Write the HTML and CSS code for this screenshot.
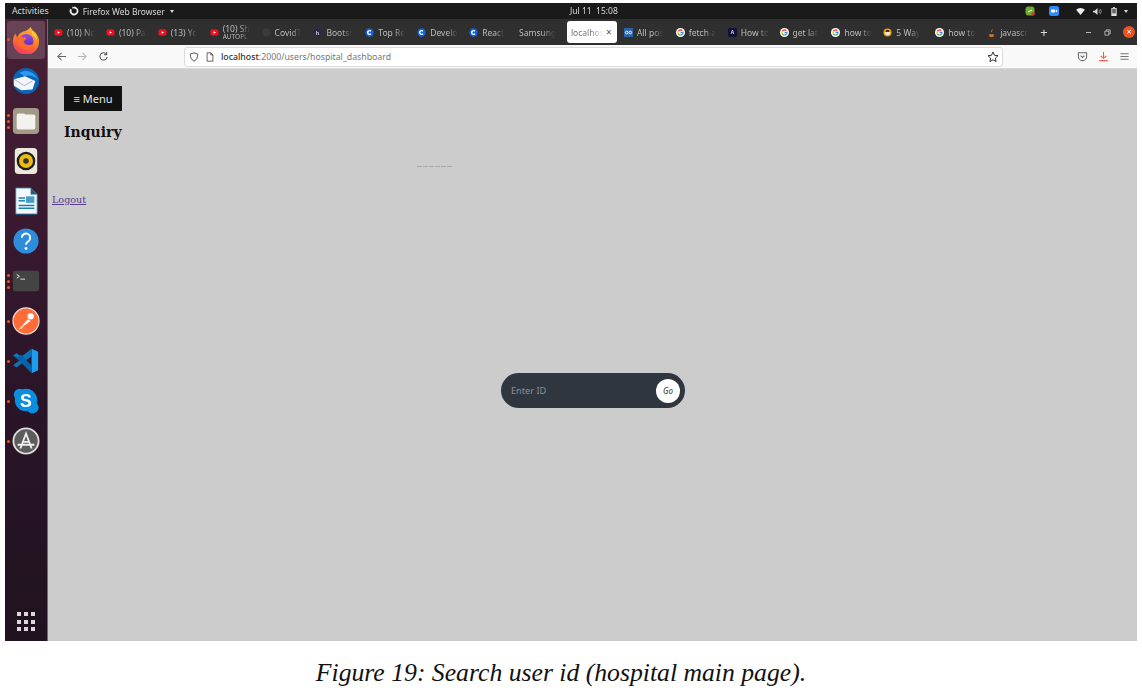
FILE: index.html
```html
<!DOCTYPE html>
<html lang="en">
<head>
<meta charset="utf-8">
<title>Figure 19</title>
<link rel="stylesheet" href="styles.css">
</head>
<body>
<svg class="defs" width="0" height="0" aria-hidden="true">
  <defs>
    <linearGradient id="foxbody" x1="0.7" y1="0" x2="0.3" y2="1"><stop offset="0" stop-color="#ffb82e"/><stop offset=".5" stop-color="#ff7a2a"/><stop offset="1" stop-color="#f0306a"/></linearGradient>
    <linearGradient id="foxglobe" x1="0.5" y1="0" x2="0.5" y2="1"><stop offset="0" stop-color="#8b4fe0"/><stop offset="1" stop-color="#5a28b8"/></linearGradient>
  </defs>
  <symbol id="yt" viewBox="0 0 10 10"><rect x="0.5" y="1.5" width="9" height="7" rx="2" fill="#f0101c"/><path d="M4 3.5 6.6 5 4 6.5z" fill="#fff"/></symbol>
  <symbol id="goog" viewBox="0 0 10 10"><circle cx="5" cy="5" r="5" fill="#fff"/><path d="M5 1.5A3.5 3.5 0 0 0 1.9 3.4L3.1 4.3A2.2 2.2 0 0 1 6.5 3.4L7.5 2.5A3.5 3.5 0 0 0 5 1.5z" fill="#ea4335"/><path d="M1.9 3.4a3.5 3.5 0 0 0 0 3.2L3.1 5.7a2.2 2.2 0 0 1 0-1.4z" fill="#fbbc05"/><path d="M1.9 6.6A3.5 3.5 0 0 0 7.4 7.5L6.3 6.7A2.2 2.2 0 0 1 3.1 5.7z" fill="#34a853"/><path d="M8.4 4.2H5v1.3h2A1.8 1.8 0 0 1 6.3 6.7L7.4 7.5A3.5 3.5 0 0 0 8.4 4.2z" fill="#4285f4"/></symbol>
  <symbol id="cc" viewBox="0 0 10 10"><circle cx="5" cy="5" r="4.6" fill="#1463d8"/><path d="M6.6 3.6A2.1 2.1 0 1 0 6.6 6.4" fill="none" stroke="#fff" stroke-width="1.5"/></symbol>
</svg>

<div class="shot">
  <header class="topbar">
    <span class="activities">Activities</span>
    <span class="appmenu">
      <svg class="appicon" viewBox="0 0 10 10"><path d="M5 .6A4.400 4.400 0 1 1 1.200 2.800L2.800 3.800A2.600 2.600 0 1 0 5 2.400z" fill="#eee"/><path d="M3.200 .4 5.600 1.500 3.600 3z" fill="#eee"/></svg>
      Firefox Web Browser
      <i class="caret"></i>
    </span>
    <span class="clock">Jul 11&nbsp;&nbsp;15:08</span>
    <span class="tray">
      <svg class="tray-i tray-green" viewBox="0 0 10 10"><rect x="0.5" y="0.5" width="9" height="9" rx="3" fill="#6cab2d"/><circle cx="8" cy="8" r="1.8" fill="#e0303a"/><path d="M3 6l4-2" stroke="#fff"/></svg>
      <svg class="tray-i tray-zoom" viewBox="0 0 10 10"><rect width="10" height="10" rx="2.5" fill="#2d8cff"/><rect x="2" y="3.4" width="4" height="3.2" rx=".8" fill="#fff"/><path d="M6.5 4.6 8.2 3.5v3L6.5 5.4z" fill="#fff"/></svg>
      <svg class="tray-i tray-wifi" viewBox="0 0 10 8"><path d="M0 2a7.5 7.5 0 0 1 10 0L5 8z" fill="#eee"/></svg>
      <svg class="tray-i tray-vol" viewBox="0 0 10 8"><path d="M0 3h2l3-3v8L2 5H0z" fill="#ddd"/><path d="M6.5 2a3 3 0 0 1 0 4M8 1a4.5 4.5 0 0 1 0 6" stroke="#999" fill="none"/></svg>
      <svg class="tray-i tray-bat" viewBox="0 0 6 10"><path d="M2 0h2v1h2v9H0V1h2z" fill="#ddd"/><rect x="1" y="2" width="4" height="5" fill="#666"/></svg>
      <i class="caret caret-tray"></i>
    </span>
  </header>

  <div class="desktop">
    <nav class="dock">
      <div class="dock-item dock-active"><i class="pip"></i>
        <svg class="dock-i" viewBox="0 0 30 30"><path d="M20 1c1 3 3 4 5 6 3 3 4 7 4 10a14 14 0 0 1-28 0c0-4 1-7 3-9 0 2 1 3 2 4 1-3 3-5 6-6 3-1 6-2 8-5z" fill="url(#foxbody)"/><circle cx="15.500" cy="16" r="7.500" fill="url(#foxglobe)"/><path d="M5 12c3-1 6 0 9 0 2 0 2 2 0 3-2 1-2 2 0 4 3 2 7 2 10-1-1 5-5 8-10 7-6-1-10-7-9-13z" fill="#ff6a2a"/><path d="M21 5c3 2 6 6 6 11-1-3-3-5-5-6z" fill="#ffd34a"/></svg>
      </div>
      <div class="dock-item">
        <svg class="dock-i" viewBox="0 0 30 30"><circle cx="15" cy="15" r="14" fill="#0a64b8"/><path d="M8 6a14 14 0 0 1 20 8c-3-4-10-6-15-4z" fill="#2e9bf0"/><path d="M2 13l12-3 11 5-3 9-12 1-8-5z" fill="#f3f6fa"/><path d="M2 13l11 7 9-5" fill="none" stroke="#9bb0c8"/></svg>
      </div>
      <div class="dock-item"><i class="pip pips"></i>
        <svg class="dock-i" viewBox="0 0 30 30"><rect x="1" y="1" width="28" height="28" rx="4" fill="#a29a86"/><rect x="5" y="8" width="20" height="16" rx="2" fill="#f4f2ee"/><path d="M5 9a2 2 0 0 1 2-2h6l2 2z" fill="#f4f2ee"/></svg>
      </div>
      <div class="dock-item">
        <svg class="dock-i" viewBox="0 0 30 30"><rect x="3" y="1" width="24" height="28" rx="4" fill="#ece8dc"/><circle cx="15" cy="15" r="10" fill="#1e1e1e"/><circle cx="15" cy="15" r="7.5" fill="#eebb11"/><circle cx="15" cy="15" r="3" fill="#333"/></svg>
      </div>
      <div class="dock-item">
        <svg class="dock-i" viewBox="0 0 30 30"><path d="M4 1h16l7 7v21H4z" fill="#f4f8fb" stroke="#1a7fb0"/><path d="M20 1l7 7h-7z" fill="#18607f"/><rect x="7" y="11" width="7" height="1.6" fill="#1a7fb0"/><rect x="7" y="14" width="7" height="1.6" fill="#1a7fb0"/><rect x="15" y="10" width="9" height="7" fill="#4a9cc8"/><rect x="7" y="19" width="17" height="1.6" fill="#1a7fb0"/><rect x="7" y="22" width="17" height="1.6" fill="#1a7fb0"/></svg>
      </div>
      <div class="dock-item">
        <svg class="dock-i" viewBox="0 0 30 30"><circle cx="15" cy="15" r="13.5" fill="#2e8cdc"/><path d="M10.5 11.5a4.5 4.5 0 1 1 7 3.7c-1.6 1-2.5 1.8-2.5 3.8" fill="none" stroke="#fff" stroke-width="2"/><circle cx="15" cy="23" r="1.5" fill="#fff"/></svg>
      </div>
      <div class="dock-item"><i class="pip pips"></i>
        <svg class="dock-i" viewBox="0 0 30 30"><rect x="1" y="4" width="28" height="22" rx="2.5" fill="#444"/><path d="M5 8l3 2-3 2" fill="none" stroke="#eee"/><path d="M9 13h5" stroke="#eee"/></svg>
      </div>
      <div class="dock-item"><i class="pip"></i>
        <svg class="dock-i" viewBox="0 0 30 30"><circle cx="15" cy="15" r="14" fill="#ff6c37" stroke="#f1ddd4" stroke-width="1.2"/><path d="M7 24l10-11 3 2z" fill="#fff"/><path d="M7 24l4-1 2-4z" fill="#ffd5c4"/><circle cx="20" cy="10" r="3.4" fill="#fff"/></svg>
      </div>
      <div class="dock-item"><i class="pip"></i>
        <svg class="dock-i" viewBox="0 0 30 30"><path d="M21 2l7 3v20l-7 3z" fill="#1f9cf0"/><path d="M21 2v8L10 18l-5 4-4-2.500 7-5-7-5.500 4-2.500 5 4z" fill="#0e72b8"/><path d="M21 20v8L5 12l5-4z" fill="#0065a9"/></svg>
      </div>
      <div class="dock-item"><i class="pip"></i>
        <svg class="dock-i" viewBox="0 0 30 30"><circle cx="15" cy="14" r="12" fill="#0a8fe0"/><circle cx="8" cy="8" r="6" fill="#0a8fe0"/><circle cx="22" cy="22" r="6.500" fill="#0a8fe0"/><text class="dock-s" x="15" y="21">S</text></svg>
      </div>
      <div class="dock-item"><i class="pip"></i>
        <svg class="dock-i" viewBox="0 0 30 30"><circle cx="15" cy="15" r="13.500" fill="#5c5c5c" stroke="#ddd" stroke-width="2"/><path d="M9 23l6-16 6 16M11 16h8M6 19h18" fill="none" stroke="#eee" stroke-width="2"/></svg>
      </div>
      <div class="dock-grid" aria-label="Show Applications">
        <i></i><i></i><i></i><i></i><i></i><i></i><i></i><i></i><i></i>
      </div>
    </nav>

    <div class="browser">
      <div class="tabstrip">
        <div class="tab"><svg class="fav"><use href="#yt"/></svg><span class="tab-t">(10) Nc</span></div>
        <div class="tab"><svg class="fav"><use href="#yt"/></svg><span class="tab-t">(10) Pa</span></div>
        <div class="tab"><svg class="fav"><use href="#yt"/></svg><span class="tab-t">(13) Yo</span></div>
        <div class="tab"><svg class="fav"><use href="#yt"/></svg><span class="tab-t tab-two">(10) Sh<small>AUTOPL</small></span></div>
        <div class="tab"><svg class="fav" viewBox="0 0 10 10"><circle cx="5" cy="5" r="4.500" fill="#3a3a3a"/></svg><span class="tab-t">CovidT</span></div>
        <div class="tab"><svg class="fav" viewBox="0 0 10 10"><circle cx="5" cy="5" r="4.500" fill="#2b2550"/><text class="fav-h" x="5" y="7.500">h</text></svg><span class="tab-t">Bootst</span></div>
        <div class="tab"><svg class="fav"><use href="#cc"/></svg><span class="tab-t">Top Re</span></div>
        <div class="tab"><svg class="fav"><use href="#cc"/></svg><span class="tab-t">Develo</span></div>
        <div class="tab"><svg class="fav"><use href="#cc"/></svg><span class="tab-t">React</span></div>
        <div class="tab tab-bare"><span class="tab-t">Samsung</span></div>
        <div class="tab tab-active"><span class="tab-t">localhos</span><span class="tab-x">×</span></div>
        <div class="tab"><svg class="fav" viewBox="0 0 10 10"><rect width="10" height="10" fill="#2a64a8"/><path d="M1.500 5a1.500 1.500 0 1 0 3 0 1.500 1.500 0 1 0-3 0M5.500 5a1.500 1.500 0 1 0 3 0 1.500 1.500 0 1 0-3 0" fill="none" stroke="#fff"/></svg><span class="tab-t">All pos</span></div>
        <div class="tab"><svg class="fav"><use href="#goog"/></svg><span class="tab-t">fetch a</span></div>
        <div class="tab"><svg class="fav" viewBox="0 0 10 10"><rect width="10" height="10" rx="2" fill="#10103a"/><text class="fav-a" x="5" y="7.200">A</text></svg><span class="tab-t">How to</span></div>
        <div class="tab"><svg class="fav"><use href="#goog"/></svg><span class="tab-t">get lat</span></div>
        <div class="tab"><svg class="fav"><use href="#goog"/></svg><span class="tab-t">how to</span></div>
        <div class="tab"><svg class="fav" viewBox="0 0 10 10"><circle cx="5" cy="5" r="4.500" fill="#e8a010"/><circle cx="5" cy="5" r="3" fill="#fbe8d0"/><path d="M2.500 4.500a2.500 2.500 0 0 1 5 0z" fill="#5a2a10"/></svg><span class="tab-t">5 Way</span></div>
        <div class="tab"><svg class="fav"><use href="#goog"/></svg><span class="tab-t">how to</span></div>
        <div class="tab"><svg class="fav" viewBox="0 0 10 10"><path d="M6 0c1 2-3 3-1 5 0-1 2-2 1-5zM2 7h6l-1 3H3z" fill="#c8752a"/></svg><span class="tab-t">javascr</span></div>
        <span class="tab-new">+</span>
        <span class="winbtns">
          <i class="win-min"></i>
          <svg class="win-res" viewBox="0 0 8 8"><path d="M1 2.500h4.500v4.500H1zM2.500 2.500V1H7v4.500H5.500" fill="none" stroke="#bbb"/></svg>
          <span class="win-close">×</span>
        </span>
      </div>

      <div class="toolbar">
        <svg class="tb-i" viewBox="0 0 12 12"><path d="M11 6H2M6 2 2 6l4 4" fill="none" stroke="#666" stroke-width="1.100"/></svg>
        <svg class="tb-i" viewBox="0 0 12 12"><path d="M1 6h9M6 2l4 4-4 4" fill="none" stroke="#b5b5b5" stroke-width="1.100"/></svg>
        <svg class="tb-i" viewBox="0 0 12 12"><path d="M10 6.500A4 4 0 1 1 8.800 3M9.500 1v3h-3" fill="none" stroke="#555" stroke-width="1.100"/></svg>
        <div class="urlbar">
          <svg class="url-i" viewBox="0 0 12 12"><path d="M6 1l4.500 1.500C10.500 7 9 9.500 6 11 3 9.500 1.500 7 1.500 2.500z" fill="none" stroke="#444" stroke-width="1.100"/></svg>
          <svg class="url-i" viewBox="0 0 12 12"><path d="M2.500 1h4.500l2.500 2.500V11h-7zM7 1v2.500h2.500" fill="none" stroke="#444"/></svg>
          <span class="url"><b>localhost</b>:2000/users/hospital_dashboard</span>
          <svg class="url-star" viewBox="0 0 12 12"><path d="M6 1l1.500 3.300 3.500.4-2.600 2.400.7 3.500L6 8.800l-3.100 1.800.7-3.500L1 4.700l3.500-.4z" fill="none" stroke="#333"/></svg>
        </div>
        <svg class="tb-i tb-pocket" viewBox="0 0 12 12"><path d="M1.500 2h9v4a4.500 4.500 0 0 1-9 0zM4 5l2 2 2-2" fill="none" stroke="#666" stroke-width="1.100"/></svg>
        <svg class="tb-i tb-dl" viewBox="0 0 12 12"><path d="M6 1v7M3 5.500 6 8l3-2.500M1.500 10.500h9" fill="none" stroke="#f0633c" stroke-width="1.200"/></svg>
        <svg class="tb-i tb-menu" viewBox="0 0 12 12"><path d="M1.500 3h9M1.500 6h9M1.500 9h9" stroke="#777" stroke-width="1.200"/></svg>
      </div>

      <main class="page">
        <div class="page-head">
          <button class="menu-btn" type="button">≡ Menu</button>
          <h1 class="inquiry">Inquiry</h1>
        </div>
        <div class="dashes"><i></i><i></i><i></i><i></i><i></i><i></i></div>
        <a class="logout" href="#">Logout</a>
        <div class="search">
          <span class="search-ph">Enter ID</span>
          <span class="search-go">Go</span>
        </div>
      </main>
    </div>
  </div>
</div>

<p class="caption">Figure 19: Search user id (hospital main page).</p>
</body>
</html>
```
FILE: styles.css
```css
* { box-sizing: border-box; }
html, body { margin: 0; padding: 0; background: #fff; }
body { width: 1142px; height: 690px; overflow: hidden; padding-top: 3px; font-family: "Noto Sans", sans-serif; }
.defs { display: block; height: 0; }

.shot { margin-left: 5px; width: 1132px; height: 638px; display: flex; flex-direction: column; filter: blur(.35px); }

/* top bar */
.topbar { height: 16px; background: #1a1a1a; color: #d8d8d8; font-size: 8.500px; display: flex; align-items: center; position: relative; flex: none; }
.activities { margin-left: 7px; font-size: 8.800px; }
.appmenu { margin-left: 20px; display: flex; align-items: center; gap: 4px; }
.appicon { width: 10px; height: 10px; }
.caret { width: 0; height: 0; border-left: 2.500px solid transparent; border-right: 2.500px solid transparent; border-top: 3px solid #ddd; margin-left: 1px; }
.clock { position: absolute; left: 565px; top: 2px; }
.tray { margin-left: auto; display: flex; align-items: center; height: 16px; }
.tray-i { display: block; }
.tray-green { width: 10px; height: 10px; margin-right: 14px; }
.tray-zoom { width: 10px; height: 10px; margin-right: 17px; }
.tray-wifi { width: 9px; height: 7px; margin-right: 8px; }
.tray-vol { width: 9px; height: 7px; margin-right: 9px; }
.tray-bat { width: 6px; height: 9px; margin-right: 7px; }
.caret-tray { margin: 0 9px 0 0; }

.desktop { flex: 1; display: flex; min-height: 0; }

/* dock */
.dock { width: 43px; flex: none; background: linear-gradient(180deg, #4a2035 0%, #3a1a30 30%, #2a1528 60%, #20121e 100%); border-right: 1px solid #6e6a6e; display: flex; flex-direction: column; padding-top: 2px; position: relative; }
.dock-item { height: 40px; display: flex; align-items: center; justify-content: center; position: relative; flex: none; }
.dock-item:first-child { height: 38px; margin: 0 2px 2px; background: rgba(255,255,255,.16); border-radius: 3px; }
.dock-i { width: 28px; height: 28px; display: block; }
.dock-s { font: bold 19px "Liberation Sans", sans-serif; fill: #fff; text-anchor: middle; }
.pip { position: absolute; left: 2px; top: 18.500px; width: 3px; height: 3px; border-radius: 50%; background: #e95420; box-shadow: none; }
.dock-item:first-child .pip { left: 0; top: 17px; }
.pips { box-shadow: 0 -6px 0 #e95420, 0 6px 0 #e95420; }
.dock-grid { margin: auto auto 10px; width: 18px; display: grid; grid-template-columns: repeat(3, 4px); justify-content: space-between; row-gap: 3.500px; }
.dock-grid i { width: 4px; height: 4px; background: #dcd8dc; }

/* browser */
.browser { flex: 1; min-width: 0; display: flex; flex-direction: column; }
.tabstrip { height: 26px; background: #2f2f2f; display: flex; align-items: center; flex: none; color: #bdbdbd; font-size: 8.500px; position: relative; }
.tab { width: 51.900px; height: 22px; display: flex; align-items: center; padding-left: 6px; gap: 4px; flex: none; }
.tab-bare { padding-left: 4px; }
.tab-active { width: 50px; background: #fff; border-radius: 3px; color: #777; padding: 0 4px; gap: 0; margin-right: 1px; }
.fav { width: 9px; height: 9px; flex: none; }
.fav-h, .fav-a { font: bold 6px "Liberation Sans", sans-serif; fill: #ddd; text-anchor: middle; }
.tab-t { white-space: nowrap; -webkit-mask-image: linear-gradient(90deg, #000 60%, transparent 100%); mask-image: linear-gradient(90deg, #000 60%, transparent 100%); }
.tab-x { font-size: 10px; color: #555; width: 10px; margin-left: auto; text-align: center; flex: none; }
.tab-two { font-size: 8.500px; line-height: 9px; }
.tab-two small { display: block; font-size: 6.500px; line-height: 7px; }
.tab-new { margin-left: 4px; font-size: 13px; color: #ddd; width: 14px; text-align: center; }
.winbtns { margin-left: auto; display: flex; align-items: center; }
.win-min { width: 5px; height: 1px; background: #bbb; margin-right: 13px; }
.win-res { width: 7px; height: 7px; margin-right: 12px; }
.win-close { width: 12px; height: 12px; border-radius: 50%; background: #e95420; color: #fff; font-size: 9px; line-height: 12px; text-align: center; margin-right: 2px; }

.toolbar { height: 24px; background: #f9f9fa; border-bottom: 1px solid #d8d8d8; display: flex; align-items: center; flex: none; padding-left: 8px; }
.tb-i { width: 11px; height: 11px; margin-right: 10px; flex: none; }
.urlbar { width: 819px; height: 20px; margin-left: 65px; background: #fff; border: 1px solid #dcdcdc; border-radius: 3px; display: flex; align-items: center; padding-left: 4px; margin-right: 74px; font-size: 8.750px; color: #777; flex: none; }
.url-i { width: 10px; height: 10px; margin-right: 6px; flex: none; }
.url { white-space: nowrap; }
.url b { font-weight: 500; color: #333; }
.url-star { width: 12px; height: 12px; margin-left: auto; margin-right: 3px; }
.tb-pocket { margin-right: 10px; }
.tb-dl { margin-right: 10px; }
.tb-menu { margin-right: 0; }

/* page */
.page { flex: 1; background: #cccccc; display: flex; flex-direction: column; min-height: 0; position: relative; }
.page-head { padding: 17px 0 0 16px; }
.menu-btn { display: block; width: 58px; height: 25px; background: #111; color: #e8e8e8; border: 0; padding: 0; font: 11px "Noto Sans", sans-serif; }
.inquiry { margin: 12px 0 0; font: bold 14px/18px "DejaVu Serif", serif; color: #111; }
.dashes { margin: 25px 0 0 369px; display: flex; gap: 1px; }
.dashes i { width: 5px; height: 1px; background: #a8a8a8; }
.logout { margin: 27px 0 0 4px; align-self: flex-start; font: 9.600px/12px "DejaVu Serif", serif; color: #5b3a8e; }
.search { margin: 167px 0 0 453px; width: 184px; height: 35px; background: #2f3640; border-radius: 18px; display: flex; align-items: center; padding: 0 5px 0 10px; flex: none; }
.search-ph { font-size: 9.200px; color: #8b8f94; }
.search-go { margin-left: auto; width: 24px; height: 24px; border-radius: 50%; background: #fff; color: #555; font: italic 500 8px/24px "Noto Sans", sans-serif; text-align: center; }

.caption { margin: 17px 0 0; padding-right: 20px; text-align: center; font: italic 25.700px/30px "Liberation Serif", serif; color: #111; }
```
